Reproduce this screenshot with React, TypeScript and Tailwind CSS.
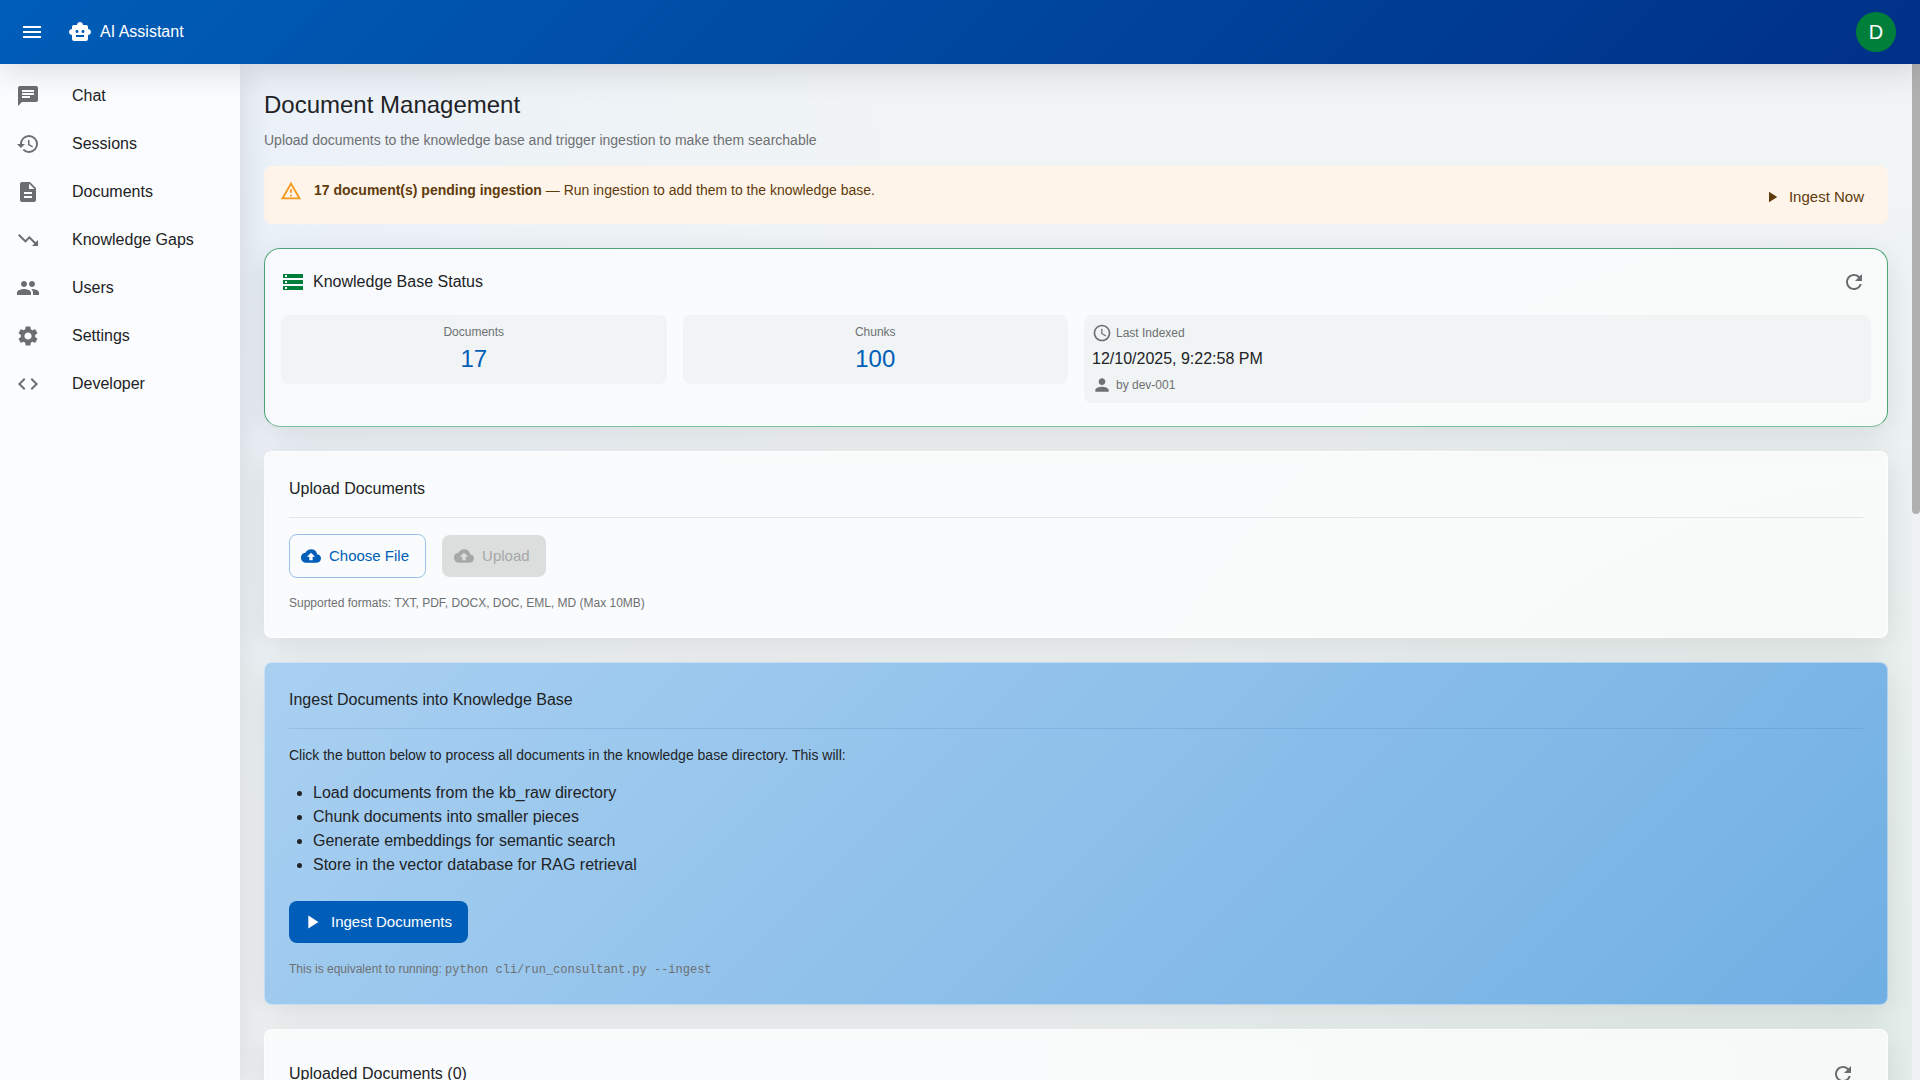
import {useRef, useState} from "react";
import {
    MdAccessTime,
    MdChat,
    MdCloudUpload,
    MdCode,
    MdDescription,
    MdHistory,
    MdMenu,
    MdOutlineReportProblem,
    MdPeople,
    MdPerson,
    MdPlayArrow,
    MdRefresh,
    MdSettings,
    MdSmartToy,
    MdStorage,
    MdTrendingDown
} from "react-icons/md";

const navigation = [
    {icon: <MdChat/>, title: "Chat"},
    {icon: <MdHistory/>, title: "Sessions"},
    {icon: <MdDescription/>, title: "Documents"},
    {icon: <MdTrendingDown/>, title: "Knowledge Gaps"},
    {icon: <MdPeople/>, title: "Users"},
    {icon: <MdSettings/>, title: "Settings"},
    {icon: <MdCode/>, title: "Developer"}
];

const ingestSteps = [
    "Load documents from the kb_raw directory",
    "Chunk documents into smaller pieces",
    "Generate embeddings for semantic search",
    "Store in the vector database for RAG retrieval"
];

const cardShadow = "shadow-[0_8px_32px_rgba(0,0,0,0.1)]";
const glassCard = `rounded-lg border border-white/60 bg-white/65 p-6 ${cardShadow}`;

const Header = ({onMenu}: { onMenu: () => void }) => (
    <header
        className="relative z-20 h-16 shrink-0 px-6 flex items-center justify-between bg-linear-135 from-[#005eb8] to-[#003087] text-white shadow-[0_8px_32px_rgba(0,0,0,0.12)]">
        <div className="flex items-center gap-6">
            <button aria-label="Toggle menu" className="-ml-1 text-2xl" onClick={onMenu}>
                <MdMenu/>
            </button>
            <div className="flex items-center gap-2">
                <MdSmartToy className="text-2xl"/>
                <span className="text-base">AI Assistant</span>
            </div>
        </div>
        <button aria-label="Account" className="size-10 rounded-full bg-[#007f3b] text-xl">D</button>
    </header>
);

const Sidebar = () => (
    <nav className="relative z-10 w-60 shrink-0 pt-2 bg-[#fbfcfd] shadow-[0_8px_32px_rgba(0,0,0,0.12)]">
        {navigation.map((item) => (
            <a href="#" key={item.title} className="flex h-12 items-center gap-8 px-4">
                <span className="text-2xl text-[#6b6d70]">{item.icon}</span>
                <span className="text-base">{item.title}</span>
            </a>
        ))}
    </nav>
);

const StatTile = ({label, value}: { label: string, value: string }) => (
    <div className="self-start rounded-lg bg-[#f0f4f5] p-2 text-center">
        <div className="text-xs leading-[19px] text-[#6e7072]">{label}</div>
        <div className="text-2xl leading-[34px] text-[#005eb8]">{value}</div>
    </div>
);

const KnowledgeBaseStatus = () => (
    <section className={`rounded-2xl border border-[#4ca576] border-b-[#7fc09d] bg-white/65 p-4 pb-[23px] ${cardShadow}`}>
        <div className="mb-4 flex items-center justify-between">
            <div className="flex items-center gap-2">
                <MdStorage className="text-2xl text-[#007f3b]"/>
                <h2 className="text-base">Knowledge Base Status</h2>
            </div>
            <button aria-label="Refresh status" className="p-[5px] text-2xl text-[#6b6d70]">
                <MdRefresh/>
            </button>
        </div>
        <div className="grid grid-cols-4 gap-4">
            <StatTile label="Documents" value="17"/>
            <StatTile label="Chunks" value="100"/>
            <div className="col-span-2 flex flex-col gap-1 rounded-lg bg-[#f0f4f5] p-2">
                <div className="flex items-center gap-1 text-xs leading-[19px] text-[#6e7072]">
                    <MdAccessTime className="text-xl"/>
                    <span>Last Indexed</span>
                </div>
                <div className="text-base">12/10/2025, 9:22:58 PM</div>
                <div className="flex items-center gap-1 text-xs leading-[19px] text-[#6e7072]">
                    <MdPerson className="text-xl"/>
                    <span>by dev-001</span>
                </div>
            </div>
        </div>
    </section>
);

const UploadDocuments = () => {

    const fileInput = useRef<HTMLInputElement>(null);
    const [file, setFile] = useState<File | null>(null);

    return (
        <section className={glassCard}>
            <h2 className="text-base leading-[25px]">Upload Documents</h2>
            <hr className="my-4 border-[#e3e6e8]"/>
            <div className="flex items-center gap-4">
                <input
                    ref={fileInput}
                    type="file"
                    aria-label="Document file"
                    className="hidden"
                    onChange={(e) => setFile(e.target.files?.[0] ?? null)}
                />
                <button
                    className="flex h-11 items-center gap-2 rounded-lg border border-[#99c0e6] pl-[11px] pr-4 text-[15px] text-[#005eb8]"
                    onClick={() => fileInput.current?.click()}>
                    <MdCloudUpload className="text-xl"/>
                    Choose File
                </button>
                <button
                    disabled={!file}
                    className="flex h-[42px] items-center gap-2 rounded-lg bg-[#005eb8] pl-3 pr-4 text-[15px] text-white disabled:bg-[#dcdedd] disabled:text-[#a6a8a8]">
                    <MdCloudUpload className="text-xl"/>
                    Upload
                </button>
            </div>
            <p className="mt-4 text-xs leading-[19px] text-[#6e7072]">
                Supported formats: TXT, PDF, DOCX, DOC, EML, MD (Max 10MB)
            </p>
        </section>
    );
};

const IngestDocuments = () => (
    <section
        className={`rounded-lg border border-white/40 bg-linear-135 from-[#a9d0f1] to-[#70afe3] bg-origin-border p-6 ${cardShadow}`}>
        <h2 className="text-base leading-[25px]">Ingest Documents into Knowledge Base</h2>
        <hr className="my-4 border-[#003087]/10"/>
        <p className="text-sm">
            Click the button below to process all documents in the knowledge base directory. This will:
        </p>
        <ul className="my-4 list-disc pl-6">
            {ingestSteps.map((step) => <li key={step}>{step}</li>)}
        </ul>
        <button
            className="mt-6 flex h-[42px] items-center gap-2 rounded-lg bg-[#005eb8] pl-3 pr-4 text-[15px] text-white">
            <MdPlayArrow className="text-[22px]"/>
            Ingest Documents
        </button>
        <p className="mt-4 text-xs leading-5 text-[#6e7072]">
            This is equivalent to running: <code
            className="font-['Courier_New','Liberation_Mono',monospace]">python cli/run_consultant.py --ingest</code>
        </p>
    </section>
);

const App = () => {

    const [isOpen, setIsOpen] = useState(true);

    return (
        <div
            className="flex h-screen flex-col overflow-hidden bg-[#f0f4f5] font-['Liberation_Sans',Arial,sans-serif] text-[#212326]">
            <Header onMenu={() => setIsOpen(!isOpen)}/>
            <div className="flex min-h-0 flex-1">
                {isOpen && <Sidebar/>}
                <main
                    className="flex-1 overflow-hidden bg-[radial-gradient(circle_at_0%_15%,#ebf1f9_0%,transparent_35%),radial-gradient(circle_at_100%_100%,#e3ede9_0%,transparent_45%)] p-6">
                    <h1 className="text-2xl leading-[34px]">Document Management</h1>
                    <p className="mt-2 text-sm text-[#6e7072]">
                        Upload documents to the knowledge base and trigger ingestion to make them searchable
                    </p>
                    <div
                        className="mt-4 flex items-start justify-between rounded-lg bg-[#fef4e9] px-4 py-[6px] text-[#5f3b0c]">
                        <div className="flex gap-3 py-2">
                            <MdOutlineReportProblem className="text-[22px] text-[#f39a1e]"/>
                            <p className="text-sm">
                                <strong>17 document(s) pending ingestion</strong> — Run ingestion to add them to the
                                knowledge base.
                            </p>
                        </div>
                        <button className="mt-1 flex h-[42px] items-center gap-2 px-2 text-[15px]">
                            <MdPlayArrow className="text-lg"/>
                            Ingest Now
                        </button>
                    </div>
                    <div className="mt-6 flex flex-col gap-6">
                        <KnowledgeBaseStatus/>
                        <UploadDocuments/>
                        <IngestDocuments/>
                        <section className={glassCard}>
                            <div className="flex items-center justify-between">
                                <h2 className="text-base">Uploaded Documents (0)</h2>
                                <button aria-label="Refresh documents" className="p-2 text-2xl text-[#6b6d70]">
                                    <MdRefresh/>
                                </button>
                            </div>
                        </section>
                    </div>
                </main>
                <div className="w-2 shrink-0 bg-[#eef2f2]">
                    <div className="h-[44.3%] rounded-b bg-[#b0b0b0]"/>
                </div>
            </div>
        </div>
    );
};

export default App;
